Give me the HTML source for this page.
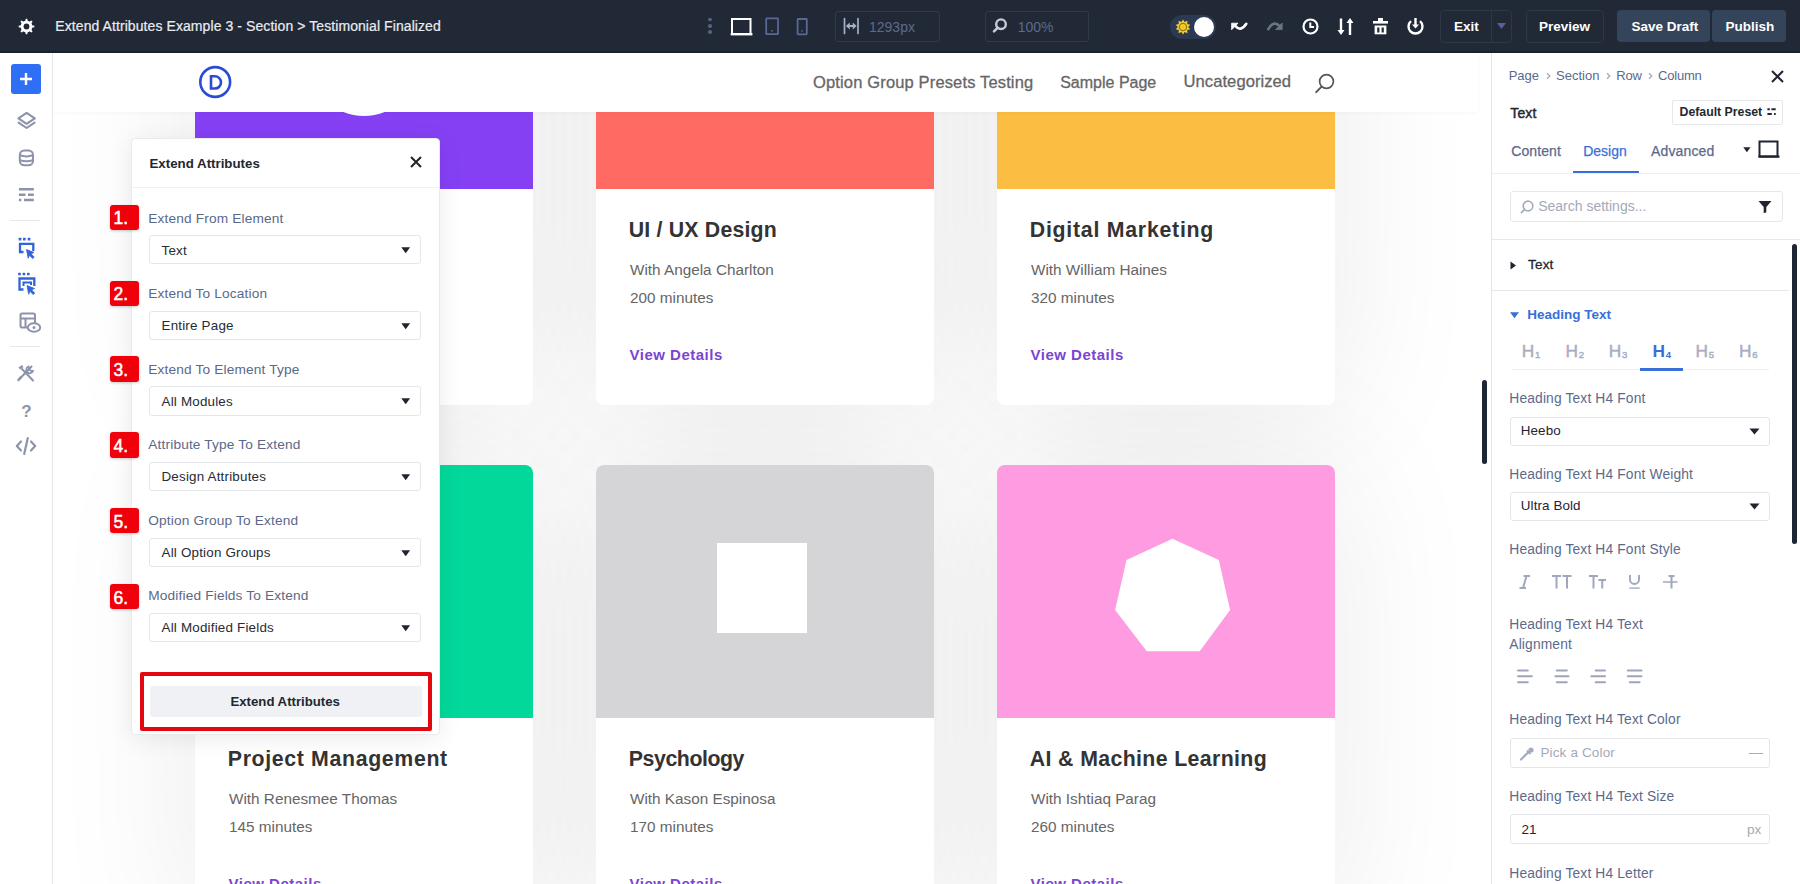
<!DOCTYPE html>
<html><head><meta charset="utf-8"><style>
*{box-sizing:border-box;margin:0;padding:0}
html,body{width:1800px;height:884px;overflow:hidden;background:#fff;font-family:"Liberation Sans",sans-serif}
.a{position:absolute;display:block}
.t{position:absolute;white-space:nowrap;line-height:1}
</style></head><body>
<div class="a" style="left:0;top:0;width:1800px;height:884px;clip-path:inset(52px 309px 0 53px);">
<div class="a" style="left:53px;top:52px;width:1438px;height:832px;background:#fff;"></div>
<div class="a" style="left:195px;top:-64px;width:338px;height:469px;border-radius:8px;box-shadow:0 0 150px rgba(0,0,0,0.085);background:#fff;"></div>
<div class="a" style="left:596px;top:-64px;width:338px;height:469px;border-radius:8px;box-shadow:0 0 150px rgba(0,0,0,0.085);background:#fff;"></div>
<div class="a" style="left:997px;top:-64px;width:338px;height:469px;border-radius:8px;box-shadow:0 0 150px rgba(0,0,0,0.085);background:#fff;"></div>
<div class="a" style="left:195px;top:465px;width:338px;height:469px;border-radius:8px;box-shadow:0 0 150px rgba(0,0,0,0.085);background:#fff;"></div>
<div class="a" style="left:596px;top:465px;width:338px;height:469px;border-radius:8px;box-shadow:0 0 150px rgba(0,0,0,0.085);background:#fff;"></div>
<div class="a" style="left:997px;top:465px;width:338px;height:469px;border-radius:8px;box-shadow:0 0 150px rgba(0,0,0,0.085);background:#fff;"></div>
<div class="a" style="left:195px;top:-64px;width:338px;height:469px;border-radius:8px;background:#fff;overflow:hidden;"></div>
<div class="a" style="left:195px;top:-64px;width:338px;height:253px;border-radius:8px 8px 0 0;background:#8540f4;"></div>
<div class="a" style="left:596px;top:-64px;width:338px;height:469px;border-radius:8px;background:#fff;overflow:hidden;"></div>
<div class="a" style="left:596px;top:-64px;width:338px;height:253px;border-radius:8px 8px 0 0;background:#ff6b63;"></div>
<div class="t " style="left:628.8px;top:219.57px;font-size:21.3px;color:#333;font-weight:700;letter-spacing:0.19px;">UI / UX Design</div>
<div class="t " style="left:630px;top:262.05px;font-size:15.3px;color:#666;">With Angela Charlton</div>
<div class="t " style="left:630px;top:289.85px;font-size:15.3px;color:#666;">200 minutes</div>
<div class="t " style="left:629.5px;top:346.90px;font-size:15px;color:#7b45d1;font-weight:700;letter-spacing:0.5px;">View Details</div>
<div class="a" style="left:997px;top:-64px;width:338px;height:469px;border-radius:8px;background:#fff;overflow:hidden;"></div>
<div class="a" style="left:997px;top:-64px;width:338px;height:253px;border-radius:8px 8px 0 0;background:#fcbd43;"></div>
<div class="t " style="left:1029.8px;top:219.57px;font-size:21.3px;color:#333;font-weight:700;letter-spacing:0.75px;">Digital Marketing</div>
<div class="t " style="left:1031px;top:262.05px;font-size:15.3px;color:#666;">With William Haines</div>
<div class="t " style="left:1031px;top:289.85px;font-size:15.3px;color:#666;">320 minutes</div>
<div class="t " style="left:1030.5px;top:346.90px;font-size:15px;color:#7b45d1;font-weight:700;letter-spacing:0.5px;">View Details</div>
<div class="a" style="left:195px;top:465px;width:338px;height:469px;border-radius:8px;background:#fff;overflow:hidden;"></div>
<div class="a" style="left:195px;top:465px;width:338px;height:253px;border-radius:8px 8px 0 0;background:#03d89b;"></div>
<div class="t " style="left:227.8px;top:748.57px;font-size:21.3px;color:#333;font-weight:700;letter-spacing:0.65px;">Project Management</div>
<div class="t " style="left:229px;top:791.05px;font-size:15.3px;color:#666;">With Renesmee Thomas</div>
<div class="t " style="left:229px;top:818.85px;font-size:15.3px;color:#666;">145 minutes</div>
<div class="t " style="left:228.5px;top:875.90px;font-size:15px;color:#7b45d1;font-weight:700;letter-spacing:0.5px;">View Details</div>
<div class="a" style="left:596px;top:465px;width:338px;height:469px;border-radius:8px;background:#fff;overflow:hidden;"></div>
<div class="a" style="left:596px;top:465px;width:338px;height:253px;border-radius:8px 8px 0 0;background:#d5d5d7;"></div>
<div class="t " style="left:628.8px;top:748.57px;font-size:21.3px;color:#333;font-weight:700;letter-spacing:-0.43px;">Psychology</div>
<div class="t " style="left:630px;top:791.05px;font-size:15.3px;color:#666;">With Kason Espinosa</div>
<div class="t " style="left:630px;top:818.85px;font-size:15.3px;color:#666;">170 minutes</div>
<div class="t " style="left:629.5px;top:875.90px;font-size:15px;color:#7b45d1;font-weight:700;letter-spacing:0.5px;">View Details</div>
<div class="a" style="left:997px;top:465px;width:338px;height:469px;border-radius:8px;background:#fff;overflow:hidden;"></div>
<div class="a" style="left:997px;top:465px;width:338px;height:253px;border-radius:8px 8px 0 0;background:#fe9be1;"></div>
<div class="t " style="left:1029.8px;top:748.57px;font-size:21.3px;color:#333;font-weight:700;letter-spacing:0.37px;">AI &amp; Machine Learning</div>
<div class="t " style="left:1031px;top:791.05px;font-size:15.3px;color:#666;">With Ishtiaq Parag</div>
<div class="t " style="left:1031px;top:818.85px;font-size:15.3px;color:#666;">260 minutes</div>
<div class="t " style="left:1030.5px;top:875.90px;font-size:15px;color:#7b45d1;font-weight:700;letter-spacing:0.5px;">View Details</div>
<div class="a" style="left:310px;top:8px;width:108px;height:108px;border-radius:50%;background:#fff;"></div>
<div class="a" style="left:717px;top:543px;width:90px;height:90px;background:#fff;"></div>
<svg class="a" style="left:1110px;top:535px;" width="125" height="120" viewBox="0 0 125 120"><polygon fill="#fff" points="62.5,3.8 108.8,25.1 120.1,75.1 89.7,116.3 36.8,116.3 5.1,75.1 16.5,25.1"/></svg>
<div class="a" style="left:53px;top:52px;width:1425px;height:60px;background:#fff;box-shadow:0 1px 5px rgba(0,0,0,0.035);"></div>
<svg class="a" style="left:198px;top:65px;" width="35" height="35" viewBox="0 0 35 35"><circle cx="17.2" cy="17" r="14.9" fill="none" stroke="#2a4bd3" stroke-width="2.6"/><path d="M13 11.3h3.9a6.1 6.1 0 0 1 0 12.2H13z" fill="none" stroke="#2a4bd3" stroke-width="2.6"/></svg>
<div class="t " style="left:813px;top:74.33px;font-size:16.5px;color:#666;letter-spacing:0.15px;-webkit-text-stroke:0.3px #666;">Option Group Presets Testing</div>
<div class="t " style="left:1060.2px;top:74.76px;font-size:16px;color:#666;-webkit-text-stroke:0.3px #666;">Sample Page</div>
<div class="t " style="left:1183.5px;top:74.25px;font-size:16.6px;color:#666;letter-spacing:0.05px;-webkit-text-stroke:0.3px #666;">Uncategorized</div>
<svg class="a" style="left:1312.1px;top:70.9px;" width="26" height="26" viewBox="0 0 26 26"><circle cx="14.5" cy="10.5" r="6.9" fill="none" stroke="#555" stroke-width="1.7"/><path d="M9.6 15.6 L4.2 21.2" stroke="#555" stroke-width="1.9" stroke-linecap="round"/></svg>
</div>
<div class="a" style="left:1482px;top:380px;width:4.5px;height:84px;background:#1f2734;border-radius:3px;"></div>
<div class="a" style="left:0px;top:0px;width:1800px;height:52.6px;background:#212936;"></div>
<div class="a" style="left:0px;top:50.6px;width:1800px;height:2px;background:#1b212b;"></div>
<svg class="a" style="left:17px;top:17px;" width="19" height="19" viewBox="0 0 19 19"><polygon points="8.15,4.07 8.81,1.63 10.19,1.63 10.85,4.07 12.38,4.70 14.58,3.45 15.55,4.42 14.30,6.62 14.93,8.15 17.37,8.81 17.37,10.19 14.93,10.85 14.30,12.38 15.55,14.58 14.58,15.55 12.38,14.30 10.85,14.93 10.19,17.37 8.81,17.37 8.15,14.93 6.62,14.30 4.42,15.55 3.45,14.58 4.70,12.38 4.07,10.85 1.63,10.19 1.63,8.81 4.07,8.15 4.70,6.62 3.45,4.42 4.42,3.45 6.62,4.70" fill="#fff"/><circle cx="9.5" cy="9.5" r="5.8" fill="#fff"/><circle cx="9.5" cy="9.5" r="2.9" fill="#212936"/></svg>
<div class="t " style="left:55.3px;top:19.15px;font-size:14px;color:#e9ecf1;letter-spacing:0.08px;-webkit-text-stroke:0.2px #e9ecf1;">Extend Attributes Example 3 - Section &gt; Testimonial Finalized</div>
<div class="a" style="left:708.3px;top:17.9px;width:3.6px;height:3.6px;border-radius:50%;background:#56637f;"></div>
<div class="a" style="left:708.3px;top:23.95px;width:3.6px;height:3.6px;border-radius:50%;background:#56637f;"></div>
<div class="a" style="left:708.3px;top:30.0px;width:3.6px;height:3.6px;border-radius:50%;background:#56637f;"></div>
<svg class="a" style="left:728px;top:16px;" width="27" height="21" viewBox="0 0 27 21"><rect x="4" y="3" width="18.5" height="15" fill="none" stroke="#fff" stroke-width="2"/><rect x="2.7" y="17" width="21.7" height="2.4" fill="#fff"/></svg>
<svg class="a" style="left:764px;top:17px;" width="16" height="19" viewBox="0 0 16 19"><rect x="2.2" y="1.4" width="11.8" height="15.8" rx="0.5" fill="none" stroke="#5a6894" stroke-width="1.8"/><rect x="7.3" y="13" width="1.6" height="1.6" fill="#5a6a9c"/></svg>
<svg class="a" style="left:795px;top:17px;" width="14" height="19" viewBox="0 0 14 19"><rect x="2.6" y="2" width="9.2" height="15.3" rx="0.5" fill="none" stroke="#5a6894" stroke-width="1.8"/><rect x="6.3" y="13.2" width="1.5" height="1.5" fill="#5a6a9c"/></svg>
<div class="a" style="left:835px;top:11px;width:105px;height:31px;border:1px solid #2f3a4b;border-radius:3px;"></div>
<svg class="a" style="left:842px;top:16px;" width="20" height="20" viewBox="0 0 20 20"><path d="M2.5 2.5v15M16 2.5v15" stroke="#a6aec6" stroke-width="1.7" stroke-linecap="round"/><path d="M6 10h6.5" stroke="#a6aec6" stroke-width="2"/><path d="M3.8 10l4-3.5v7z M14.7 10l-4-3.5v7z" fill="#a6aec6"/></svg>
<div class="t " style="left:869px;top:19.65px;font-size:14px;color:#5c6a8c;">1293px</div>
<div class="a" style="left:984.5px;top:11px;width:104px;height:31px;border:1px solid #2f3a4b;border-radius:3px;"></div>
<svg class="a" style="left:991px;top:17px;" width="18" height="17" viewBox="0 0 18 17"><circle cx="10" cy="7.2" r="4.8" fill="none" stroke="#c5cbd8" stroke-width="2.4"/><path d="M6.5 10.8L3 14.3" stroke="#c5cbd8" stroke-width="2.6" stroke-linecap="round"/></svg>
<div class="t " style="left:1017.7px;top:19.65px;font-size:14px;color:#5c6a8c;">100%</div>
<div class="a" style="left:1170px;top:14.5px;width:46px;height:24px;border-radius:12px;background:#2b3a52;"></div>
<svg class="a" style="left:1175px;top:18.5px;" width="16" height="16" viewBox="0 0 16 16"><polygon points="8.00,0.40 9.61,3.05 12.47,1.85 12.21,4.94 15.23,5.65 13.20,8.00 15.23,10.35 12.21,11.06 12.47,14.15 9.61,12.95 8.00,15.60 6.39,12.95 3.53,14.15 3.79,11.06 0.77,10.35 2.80,8.00 0.77,5.65 3.79,4.94 3.53,1.85 6.39,3.05" fill="#f2cf3a"/><circle cx="8" cy="8" r="3.6" fill="none" stroke="#9c7a00" stroke-width="1.3"/><circle cx="8" cy="8" r="1.5" fill="#e8c020"/></svg>
<div class="a" style="left:1193.5px;top:16.5px;width:20px;height:20px;border-radius:50%;background:#fff;"></div>
<svg class="a" style="left:1225px;top:12px;" width="65" height="28" viewBox="0 0 65 28"><path d="M10.2 13.8Q15.5 20.5 21.3 11.8" fill="none" stroke="#fff" stroke-width="2.6" stroke-linecap="round"/><path d="M6.6 11.2h6.4l-6.4 6.6z" fill="#fff" stroke="#fff" stroke-width="0.8" stroke-linejoin="round"/><path d="M43.3 17.2Q48.5 7.8 54.8 14.2" fill="none" stroke="#6b7484" stroke-width="2.6" stroke-linecap="round"/><path d="M57.2 11v6.6h-6.6z" fill="#6b7484" stroke="#6b7484" stroke-width="0.8" stroke-linejoin="round"/></svg>
<svg class="a" style="left:1301px;top:17px;" width="19" height="19" viewBox="0 0 19 19"><circle cx="9.5" cy="9.5" r="7" fill="none" stroke="#fff" stroke-width="2.2"/><path d="M9.3 5.5v4.5h3.8" fill="none" stroke="#fff" stroke-width="2"/></svg>
<svg class="a" style="left:1336px;top:17px;" width="19" height="19" viewBox="0 0 19 19"><path d="M5 1.5v13.5M14 4v14" stroke="#fff" stroke-width="2.4"/><path d="M1.5 13l3.5 5 3.5-5z M10.5 6l3.5-5 3.5 5z" fill="#fff"/></svg>
<svg class="a" style="left:1372px;top:17px;" width="17" height="19" viewBox="0 0 17 19"><rect x="6" y="1" width="5" height="3" fill="#fff"/><rect x="1" y="4" width="15" height="2.6" fill="#fff"/><path d="M2.6 8.5h11.8v8.8H2.6z" fill="#fff"/><rect x="5.2" y="10.5" width="2.2" height="5" fill="#212936"/><rect x="9.6" y="10.5" width="2.2" height="5" fill="#212936"/></svg>
<svg class="a" style="left:1406px;top:17px;" width="19" height="19" viewBox="0 0 19 19"><path d="M5 4.2A7 7 0 1 0 14 4.2" fill="none" stroke="#fff" stroke-width="2.4"/><path d="M9.5 1v8" stroke="#fff" stroke-width="2.4"/><path d="M6 7.5l3.5 4 3.5-4z" fill="#fff"/></svg>
<div class="a" style="left:1440px;top:9.5px;width:72px;height:33px;border:1px solid #2d3746;border-radius:4px;"></div>
<div class="a" style="left:1491px;top:10px;width:1px;height:32px;background:#2d3746;"></div>
<div class="t " style="left:1454px;top:19.57px;font-size:13.5px;color:#fff;font-weight:700;">Exit</div>
<svg class="a" style="left:1497px;top:23px;" width="9" height="6" viewBox="0 0 9 6"><path d="M0 0h9L4.5 6z" fill="#5a5f9a"/></svg>
<div class="a" style="left:1525.5px;top:9.5px;width:78px;height:33px;border:1px solid #2d3746;border-radius:4px;"></div>
<div class="t " style="left:1539px;top:19.57px;font-size:13.5px;color:#fff;font-weight:700;">Preview</div>
<div class="a" style="left:1617px;top:10px;width:93px;height:32px;background:#34445b;border-radius:4px;"></div>
<div class="t " style="left:1631.4px;top:19.57px;font-size:13.5px;color:#fff;font-weight:700;">Save Draft</div>
<div class="a" style="left:1712px;top:10px;width:74px;height:32px;background:#34445b;border-radius:4px;"></div>
<div class="t " style="left:1725.6px;top:19.57px;font-size:13.5px;color:#fff;font-weight:700;">Publish</div>
<div class="a" style="left:0px;top:52px;width:53px;height:832px;background:#fff;border-right:1px solid #e4e6ea;"></div>
<div class="a" style="left:11px;top:64px;width:30px;height:30px;background:#2f6ff5;border-radius:3px;"></div>
<svg class="a" style="left:11px;top:64px;" width="30" height="30" viewBox="0 0 30 30"><path d="M15 9v12M9 15h12" stroke="#fff" stroke-width="2.4"/></svg>
<svg class="a" style="left:10px;top:105px;" width="35" height="100" viewBox="0 0 35 100"><path d="M16.6 7.8l8.2 5.5-8.2 5.5-8.2-5.5z" fill="none" stroke="#8d93aa" stroke-width="2.1" stroke-linejoin="round"/><path d="M8.6 17.6l8 5.4 8-5.4" fill="none" stroke="#8d93aa" stroke-width="2.1" stroke-linejoin="round" stroke-linecap="round"/><rect x="9.8" y="45.5" width="13.2" height="14.8" rx="4.5" fill="none" stroke="#8d93aa" stroke-width="2"/><path d="M9.8 50.3q6.6 2.2 13.2 0M9.8 55.2q6.6 2.2 13.2 0" fill="none" stroke="#8d93aa" stroke-width="2"/><path d="M8.9 84.3h14.9M8.9 89.7h6.6M18 89.7h5.8M8.9 95h2.4M14 95h9.8" stroke="#8d93aa" stroke-width="2.6"/></svg>
<div class="a" style="left:10px;top:220px;width:30px;height:1px;background:#e6e8ec;"></div>
<svg class="a" style="left:10px;top:230px;" width="35" height="70" viewBox="0 0 35 70"><g fill="#3263d8"><rect x="8.7" y="7.8" width="2.6" height="2.6" rx="0.5"/><rect x="13" y="7.8" width="2.6" height="2.6" rx="0.5"/><rect x="17.7" y="7.8" width="2.6" height="2.6" rx="0.5"/><rect x="8.2" y="42.7" width="2.6" height="2.6" rx="0.5"/><rect x="12.6" y="42.7" width="2.6" height="2.6" rx="0.5"/><rect x="17" y="42.7" width="2.6" height="2.6" rx="0.5"/></g><path d="M13.5 22H10V13.8h13.3V21" fill="none" stroke="#3263d8" stroke-width="2.3"/><path d="M16.5 19.5l7.5 3-3 1.3 3.2 3.3-1.5 1.5-3.2-3.3-1.3 3z" fill="#3263d8" stroke="#3263d8" stroke-width="0.8" stroke-linejoin="round"/><path d="M13.5 59.5H9.5V48.5h14.8V56" fill="none" stroke="#3263d8" stroke-width="2.3"/><path d="M13.5 56V52.5h7.5V55" fill="none" stroke="#3263d8" stroke-width="2"/><path d="M17 55.5l7.5 3-3 1.3 3.2 3.3-1.5 1.5-3.2-3.3-1.3 3z" fill="#3263d8" stroke="#3263d8" stroke-width="0.8" stroke-linejoin="round"/></svg>
<svg class="a" style="left:17px;top:310px;" width="26" height="25" viewBox="0 0 26 25"><rect x="3.5" y="3.5" width="14.5" height="14" rx="1.8" fill="none" stroke="#8d93aa" stroke-width="2"/><path d="M3.5 8.5h14.5M8.5 8.5v9" stroke="#8d93aa" stroke-width="2"/><ellipse cx="17" cy="17.5" rx="6.2" ry="4.3" fill="#fff" stroke="#8d93aa" stroke-width="2"/><circle cx="17" cy="17.5" r="1.5" fill="#8d93aa"/></svg>
<div class="a" style="left:10px;top:346px;width:30px;height:1px;background:#e6e8ec;"></div>
<svg class="a" style="left:15px;top:362px;" width="22" height="22" viewBox="0 0 22 22"><path d="M7 7l11 11.5" stroke="#8d93aa" stroke-width="2" stroke-linecap="round"/><path d="M3.5 5.5l3.5-2.5 1.5 2-3.5 2.5z" fill="#8d93aa"/><path d="M16.5 4.5L5 16.5" stroke="#8d93aa" stroke-width="2" stroke-linecap="round"/><path d="M13.5 4.5a3.5 3.5 0 1 0 4.5 4.5l-2.3-0.3-1.6-1.6z" fill="none" stroke="#8d93aa" stroke-width="1.8"/><path d="M5.5 15.5l-2 2.5" stroke="#8d93aa" stroke-width="2.4" stroke-linecap="round"/></svg>
<div class="t " style="left:21.3px;top:403.11px;font-size:17px;color:#8d93aa;font-weight:700;">?</div>
<svg class="a" style="left:13px;top:433px;" width="26" height="26" viewBox="0 0 26 26"><path d="M8 8.5L3.8 13l4.2 4.5M18 8.5L22.2 13 18 17.5M14.8 5l-3.6 16" fill="none" stroke="#8d93aa" stroke-width="2.2" stroke-linecap="round" stroke-linejoin="round"/></svg>
<div class="a" style="left:131px;top:138px;width:308.5px;height:597px;background:#fff;border:1px solid #e8eaee;border-radius:4px;box-shadow:0 4px 24px rgba(0,0,0,0.08);"></div>
<div class="t " style="left:149.5px;top:156.94px;font-size:13.3px;color:#222831;font-weight:700;">Extend Attributes</div>
<svg class="a" style="left:409px;top:155px;" width="14" height="14" viewBox="0 0 14 14"><path d="M2 2l10 10M12 2L2 12" stroke="#222" stroke-width="2"/></svg>
<div class="a" style="left:132.5px;top:187px;width:306px;height:1px;background:#eef0f2;"></div>
<div class="a" style="left:110px;top:204.6px;width:28.5px;height:25.3px;background:#f0000b;border-radius:3px;box-shadow:0 1px 3px rgba(0,0,0,0.2);"></div>
<div class="t " style="left:113.5px;top:210.09px;font-size:17.5px;color:#fff;-webkit-text-stroke:0.5px #fff;">1.</div>
<div class="t " style="left:148.3px;top:211.60px;font-size:13.7px;color:#5c6888;letter-spacing:0.15px;">Extend From Element</div>
<div class="a" style="left:149px;top:235.2px;width:272px;height:29.3px;background:#fff;border:1px solid #e4e6ea;border-radius:3px;"></div>
<div class="t " style="left:161.5px;top:243.96px;font-size:13.4px;color:#262b34;letter-spacing:0.2px;">Text</div>
<svg class="a" style="left:400.6px;top:247.2px;" width="10" height="7" viewBox="0 0 10 7"><path d="M0.3 0.2h8.8L4.7 6.2z" fill="#1f2430"/></svg>
<div class="a" style="left:110px;top:280.5px;width:28.5px;height:25.3px;background:#f0000b;border-radius:3px;box-shadow:0 1px 3px rgba(0,0,0,0.2);"></div>
<div class="t " style="left:113.5px;top:285.99px;font-size:17.5px;color:#fff;-webkit-text-stroke:0.5px #fff;">2.</div>
<div class="t " style="left:148.3px;top:287.16px;font-size:13.7px;color:#5c6888;letter-spacing:0.15px;">Extend To Location</div>
<div class="a" style="left:149px;top:310.79999999999995px;width:272px;height:29.3px;background:#fff;border:1px solid #e4e6ea;border-radius:3px;"></div>
<div class="t " style="left:161.5px;top:319.46px;font-size:13.4px;color:#262b34;letter-spacing:0.2px;">Entire Page</div>
<svg class="a" style="left:400.6px;top:322.79999999999995px;" width="10" height="7" viewBox="0 0 10 7"><path d="M0.3 0.2h8.8L4.7 6.2z" fill="#1f2430"/></svg>
<div class="a" style="left:110px;top:356.4px;width:28.5px;height:25.3px;background:#f0000b;border-radius:3px;box-shadow:0 1px 3px rgba(0,0,0,0.2);"></div>
<div class="t " style="left:113.5px;top:361.89px;font-size:17.5px;color:#fff;-webkit-text-stroke:0.5px #fff;">3.</div>
<div class="t " style="left:148.3px;top:362.72px;font-size:13.7px;color:#5c6888;letter-spacing:0.15px;">Extend To Element Type</div>
<div class="a" style="left:149px;top:386.4px;width:272px;height:29.3px;background:#fff;border:1px solid #e4e6ea;border-radius:3px;"></div>
<div class="t " style="left:161.5px;top:394.96px;font-size:13.4px;color:#262b34;letter-spacing:0.2px;">All Modules</div>
<svg class="a" style="left:400.6px;top:398.4px;" width="10" height="7" viewBox="0 0 10 7"><path d="M0.3 0.2h8.8L4.7 6.2z" fill="#1f2430"/></svg>
<div class="a" style="left:110px;top:432.3px;width:28.5px;height:25.3px;background:#f0000b;border-radius:3px;box-shadow:0 1px 3px rgba(0,0,0,0.2);"></div>
<div class="t " style="left:113.5px;top:437.79px;font-size:17.5px;color:#fff;-webkit-text-stroke:0.5px #fff;">4.</div>
<div class="t " style="left:148.3px;top:438.28px;font-size:13.7px;color:#5c6888;letter-spacing:0.15px;">Attribute Type To Extend</div>
<div class="a" style="left:149px;top:462.0px;width:272px;height:29.3px;background:#fff;border:1px solid #e4e6ea;border-radius:3px;"></div>
<div class="t " style="left:161.5px;top:470.46px;font-size:13.4px;color:#262b34;letter-spacing:0.2px;">Design Attributes</div>
<svg class="a" style="left:400.6px;top:474.0px;" width="10" height="7" viewBox="0 0 10 7"><path d="M0.3 0.2h8.8L4.7 6.2z" fill="#1f2430"/></svg>
<div class="a" style="left:110px;top:508.20000000000005px;width:28.5px;height:25.3px;background:#f0000b;border-radius:3px;box-shadow:0 1px 3px rgba(0,0,0,0.2);"></div>
<div class="t " style="left:113.5px;top:513.69px;font-size:17.5px;color:#fff;-webkit-text-stroke:0.5px #fff;">5.</div>
<div class="t " style="left:148.3px;top:513.84px;font-size:13.7px;color:#5c6888;letter-spacing:0.15px;">Option Group To Extend</div>
<div class="a" style="left:149px;top:537.5999999999999px;width:272px;height:29.3px;background:#fff;border:1px solid #e4e6ea;border-radius:3px;"></div>
<div class="t " style="left:161.5px;top:545.96px;font-size:13.4px;color:#262b34;letter-spacing:0.2px;">All Option Groups</div>
<svg class="a" style="left:400.6px;top:549.5999999999999px;" width="10" height="7" viewBox="0 0 10 7"><path d="M0.3 0.2h8.8L4.7 6.2z" fill="#1f2430"/></svg>
<div class="a" style="left:110px;top:584.1px;width:28.5px;height:25.3px;background:#f0000b;border-radius:3px;box-shadow:0 1px 3px rgba(0,0,0,0.2);"></div>
<div class="t " style="left:113.5px;top:589.59px;font-size:17.5px;color:#fff;-webkit-text-stroke:0.5px #fff;">6.</div>
<div class="t " style="left:148.3px;top:589.40px;font-size:13.7px;color:#5c6888;letter-spacing:0.15px;">Modified Fields To Extend</div>
<div class="a" style="left:149px;top:613.2px;width:272px;height:29.3px;background:#fff;border:1px solid #e4e6ea;border-radius:3px;"></div>
<div class="t " style="left:161.5px;top:621.46px;font-size:13.4px;color:#262b34;letter-spacing:0.2px;">All Modified Fields</div>
<svg class="a" style="left:400.6px;top:625.2px;" width="10" height="7" viewBox="0 0 10 7"><path d="M0.3 0.2h8.8L4.7 6.2z" fill="#1f2430"/></svg>
<div class="a" style="left:140px;top:672px;width:291.5px;height:59px;border:4px solid #e5070f;border-radius:2px;"></div>
<div class="a" style="left:149.5px;top:685.5px;width:272px;height:31.5px;background:#eff1f4;border-radius:3px;"></div>
<div class="t" style="left:85.19999999999999px;width:400px;text-align:center;top:694.83px;font-size:13.2px;color:#222831;font-weight:700;">Extend Attributes</div>
<div class="a" style="left:1491px;top:52px;width:309px;height:832px;background:#fff;border-left:1px solid #e3e5e9;"></div>
<div class="t " style="left:1508.8px;top:69.00px;font-size:13px;color:#5b6a8c;letter-spacing:-0.1px;">Page</div>
<svg class="a" style="left:1545px;top:71px;" width="7" height="10" viewBox="0 0 7 10"><path d="M2 2.3l2.8 2.7-2.8 2.7" fill="none" stroke="#a1a8b8" stroke-width="1.2"/></svg>
<div class="t " style="left:1556px;top:69.00px;font-size:13px;color:#5b6a8c;">Section</div>
<svg class="a" style="left:1605px;top:71px;" width="7" height="10" viewBox="0 0 7 10"><path d="M2 2.3l2.8 2.7-2.8 2.7" fill="none" stroke="#a1a8b8" stroke-width="1.2"/></svg>
<div class="t " style="left:1616.2px;top:69.00px;font-size:13px;color:#5b6a8c;letter-spacing:-0.2px;">Row</div>
<svg class="a" style="left:1647px;top:71px;" width="7" height="10" viewBox="0 0 7 10"><path d="M2 2.3l2.8 2.7-2.8 2.7" fill="none" stroke="#a1a8b8" stroke-width="1.2"/></svg>
<div class="t " style="left:1658px;top:69.00px;font-size:13px;color:#5b6a8c;letter-spacing:-0.2px;">Column</div>
<svg class="a" style="left:1770px;top:69px;" width="15" height="15" viewBox="0 0 15 15"><path d="M2 2l11 11M13 2L2 13" stroke="#1f2430" stroke-width="2"/></svg>
<div class="t " style="left:1510.3px;top:106.05px;font-size:14px;color:#222831;letter-spacing:0.1px;-webkit-text-stroke:0.45px #222831;">Text</div>
<div class="a" style="left:1672px;top:99.5px;width:110.5px;height:25px;border:1px solid #e6e8eb;border-radius:2px;background:#fff;"></div>
<div class="t " style="left:1679.5px;top:105.69px;font-size:12.3px;color:#222831;font-weight:700;">Default Preset</div>
<svg class="a" style="left:1766px;top:105px;" width="12" height="12" viewBox="0 0 12 12"><path d="M1.4 4.2h2.4M5.4 4.2h4.3M1.4 9h4.4M8 9h1.7" stroke="#222831" stroke-width="2"/></svg>
<div class="t " style="left:1511.2px;top:143.95px;font-size:14px;color:#5b6a8c;letter-spacing:0.1px;-webkit-text-stroke:0.25px #5b6a8c;">Content</div>
<div class="t " style="left:1583.2px;top:143.95px;font-size:14px;color:#3a6fd8;-webkit-text-stroke:0.25px #3a6fd8;">Design</div>
<div class="t " style="left:1651px;top:143.95px;font-size:14px;color:#5b6a8c;letter-spacing:0.15px;-webkit-text-stroke:0.25px #5b6a8c;">Advanced</div>
<svg class="a" style="left:1742.5px;top:146.8px;" width="8" height="6" viewBox="0 0 8 6"><path d="M0.3 0.3h7.2L3.9 5.2z" fill="#1f2430"/></svg>
<svg class="a" style="left:1757px;top:139px;" width="24" height="21" viewBox="0 0 24 21"><rect x="2.5" y="2.5" width="18" height="15" fill="none" stroke="#1f2430" stroke-width="2"/><rect x="1.5" y="16.5" width="21" height="2.2" fill="#1f2430"/></svg>
<div class="a" style="left:1573px;top:171px;width:66px;height:3px;background:#3a6fd8;"></div>
<div class="a" style="left:1492px;top:172.5px;width:308px;height:1px;background:#eceef1;"></div>
<div class="a" style="left:1510px;top:191px;width:272.5px;height:30.5px;border:1px solid #e6e8ec;border-radius:3px;"></div>
<svg class="a" style="left:1519px;top:198.5px;" width="16" height="16" viewBox="0 0 16 16"><circle cx="9" cy="7" r="4.8" fill="none" stroke="#a6adbb" stroke-width="1.7"/><path d="M5.6 10.4L2.5 13.5" stroke="#a6adbb" stroke-width="1.8" stroke-linecap="round"/></svg>
<div class="t " style="left:1538.2px;top:199.15px;font-size:14px;color:#a3a9b7;">Search settings...</div>
<svg class="a" style="left:1758px;top:199.5px;" width="14" height="14" viewBox="0 0 14 14"><path d="M0.5 1h13L8.3 7v5.5L5.7 13V7z" fill="#1f2430"/></svg>
<div class="a" style="left:1492px;top:239px;width:308px;height:1px;background:#e6e8eb;"></div>
<svg class="a" style="left:1509.5px;top:260.5px;" width="7" height="9" viewBox="0 0 7 9"><path d="M0.5 0.5l5.5 4-5.5 4z" fill="#1f2430"/></svg>
<div class="t " style="left:1528px;top:258.17px;font-size:13.5px;color:#222831;letter-spacing:0.2px;-webkit-text-stroke:0.3px #222831;">Text</div>
<div class="a" style="left:1492px;top:290px;width:297px;height:1px;background:#e6e8eb;"></div>
<svg class="a" style="left:1509.5px;top:311.5px;" width="10" height="7" viewBox="0 0 10 7"><path d="M0 0.3h9L4.5 6.2z" fill="#3a6fd8"/></svg>
<div class="t " style="left:1527.3px;top:308.37px;font-size:13.5px;color:#3a6fd8;font-weight:700;">Heading Text</div>
<div class="t " style="left:1521.7px;top:342.96px;font-size:17.3px;color:#a8aec0;-webkit-text-stroke:0.45px #a8aec0;">H</div>
<div class="t " style="left:1535.0px;top:349.56px;font-size:9.5px;color:#a8aec0;-webkit-text-stroke:0.45px #a8aec0;">1</div>
<div class="t " style="left:1565.4px;top:342.96px;font-size:17.3px;color:#a8aec0;-webkit-text-stroke:0.45px #a8aec0;">H</div>
<div class="t " style="left:1578.7px;top:349.56px;font-size:9.5px;color:#a8aec0;-webkit-text-stroke:0.45px #a8aec0;">2</div>
<div class="t " style="left:1608.8px;top:342.96px;font-size:17.3px;color:#a8aec0;-webkit-text-stroke:0.45px #a8aec0;">H</div>
<div class="t " style="left:1622.1px;top:349.56px;font-size:9.5px;color:#a8aec0;-webkit-text-stroke:0.45px #a8aec0;">3</div>
<div class="t " style="left:1652.5px;top:342.96px;font-size:17.3px;color:#3a6fd8;font-weight:700;">H</div>
<div class="t " style="left:1665.8px;top:349.56px;font-size:9.5px;color:#3a6fd8;font-weight:700;">4</div>
<div class="t " style="left:1695.5px;top:342.96px;font-size:17.3px;color:#a8aec0;-webkit-text-stroke:0.45px #a8aec0;">H</div>
<div class="t " style="left:1708.8px;top:349.56px;font-size:9.5px;color:#a8aec0;-webkit-text-stroke:0.45px #a8aec0;">5</div>
<div class="t " style="left:1739px;top:342.96px;font-size:17.3px;color:#a8aec0;-webkit-text-stroke:0.45px #a8aec0;">H</div>
<div class="t " style="left:1752.3px;top:349.56px;font-size:9.5px;color:#a8aec0;-webkit-text-stroke:0.45px #a8aec0;">6</div>
<div class="a" style="left:1511.5px;top:369px;width:257px;height:1px;background:#eceef1;"></div>
<div class="a" style="left:1640px;top:368px;width:43px;height:3px;background:#3a6fd8;"></div>
<div class="t " style="left:1509.3px;top:391.82px;font-size:13.8px;color:#5b6a8c;letter-spacing:0.15px;">Heading Text H4 Font</div>
<div class="a" style="left:1510px;top:416.5px;width:259.5px;height:29px;border:1px solid #e4e6ea;border-radius:3px;background:#fff;"></div>
<div class="t " style="left:1520.8px;top:424.46px;font-size:13.4px;color:#1f2430;letter-spacing:0.1px;">Heebo</div>
<svg class="a" style="left:1749px;top:427.5px;" width="11" height="8" viewBox="0 0 11 8"><path d="M0.5 0.5h10L5.5 6.5z" fill="#1f2430"/></svg>
<div class="t " style="left:1509.3px;top:468.22px;font-size:13.8px;color:#5b6a8c;letter-spacing:0.15px;">Heading Text H4 Font Weight</div>
<div class="a" style="left:1510px;top:491.5px;width:259.5px;height:29px;border:1px solid #e4e6ea;border-radius:3px;background:#fff;"></div>
<div class="t " style="left:1520.8px;top:499.46px;font-size:13.4px;color:#1f2430;letter-spacing:0.1px;">Ultra Bold</div>
<svg class="a" style="left:1749px;top:502.5px;" width="11" height="8" viewBox="0 0 11 8"><path d="M0.5 0.5h10L5.5 6.5z" fill="#1f2430"/></svg>
<div class="t " style="left:1509.3px;top:543.22px;font-size:13.8px;color:#5b6a8c;letter-spacing:0.15px;">Heading Text H4 Font Style</div>
<svg class="a" style="left:1515px;top:572px;" width="170" height="20" viewBox="0 0 170 20"><g fill="none" stroke="#a0a7bc" stroke-width="2"><path d="M8.5 4h6.5M4.5 16h6.5M11.5 4L8 16"/><path d="M37 4h9M41.5 4v12.5M47.5 4h9M52 4v12.5"/><path d="M74 4h9M78.5 4v12.5M83.5 8h7.5M87.25 8v8.5"/><path d="M115 3v4.5a4.5 4.5 0 0 0 9 0V3" stroke-width="1.9"/><path d="M114.3 16.1h10.4" stroke-width="1.3"/><path d="M153.5 4h6M156.5 4v12.5"/><path d="M148 10h14.5" stroke-width="1.5"/></g></svg>
<div class="t " style="left:1509.3px;top:618.42px;font-size:13.8px;color:#5b6a8c;letter-spacing:0.15px;">Heading Text H4 Text</div>
<div class="t " style="left:1509.3px;top:637.62px;font-size:13.8px;color:#5b6a8c;letter-spacing:0.15px;">Alignment</div>
<svg class="a" style="left:1510px;top:664px;" width="140" height="24" viewBox="0 0 140 24"><g stroke="#9ea5ba" stroke-width="2" stroke-linecap="round"><path d="M8 6.6h9.8M8 12.3h13.8M8 18.2h9.8"/><path d="M46.7 6.6h10.1M45.3 12.3h13.2M46.7 18.2h10.1"/><path d="M85.7 6.6h9.3M81.3 12.3h13.7M85.7 18.2h9.3"/><path d="M117.8 6.6h13.7M117.8 12.3h13.7M119.8 18.2h9.8"/></g></svg>
<div class="t " style="left:1509.3px;top:713.42px;font-size:13.8px;color:#5b6a8c;letter-spacing:0.15px;">Heading Text H4 Text Color</div>
<div class="a" style="left:1510px;top:737.5px;width:259.5px;height:30px;border:1px solid #e4e6ea;border-radius:3px;"></div>
<svg class="a" style="left:1518px;top:745px;" width="17" height="17" viewBox="0 0 17 17"><path d="M3 14.5l7.5-7.5" stroke="#a3abc0" stroke-width="2.2" stroke-linecap="round"/><path d="M9 5.5l3.5 3.5" stroke="#a3abc0" stroke-width="2"/><circle cx="13" cy="5" r="2.6" fill="#a3abc0"/></svg>
<div class="t " style="left:1540.4px;top:746.07px;font-size:13.5px;color:#a3a9b7;letter-spacing:0.15px;">Pick a Color</div>
<div class="a" style="left:1748.5px;top:752.5px;width:14px;height:1.3px;background:#a3abc0;"></div>
<div class="t " style="left:1509.3px;top:790.22px;font-size:13.8px;color:#5b6a8c;letter-spacing:0.15px;">Heading Text H4 Text Size</div>
<div class="a" style="left:1510px;top:813.5px;width:259.5px;height:30px;border:1px solid #e4e6ea;border-radius:3px;"></div>
<div class="t " style="left:1521.5px;top:822.57px;font-size:13.5px;color:#1f2430;">21</div>
<div class="t " style="left:1747px;top:822.57px;font-size:13.5px;color:#a3a9b7;">px</div>
<div class="t " style="left:1509.3px;top:866.72px;font-size:13.8px;color:#5b6a8c;letter-spacing:0.15px;">Heading Text H4 Letter</div>
<div class="a" style="left:1792px;top:244px;width:4.5px;height:300px;background:#1f2734;border-radius:3px;"></div>
<div class="a" style="left:0px;top:50.6px;width:1800px;height:2.1px;background:#1b212b;"></div>
</body></html>
